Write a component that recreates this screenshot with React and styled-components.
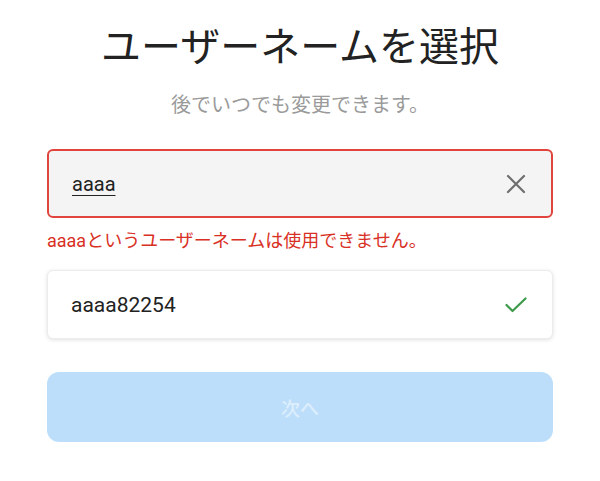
import React from 'react';
import styled, { createGlobalStyle } from 'styled-components';

const GlobalStyle = createGlobalStyle`
  body {
    margin: 0;
    background: #ffffff;
    font-family: Roboto, "Noto Sans CJK JP", sans-serif;
  }
`;

const Page = styled.div`
  width: 506px;
  margin: 0 auto;
  padding-top: 23px;
  display: flex;
  flex-direction: column;
`;

const Title = styled.h1`
  margin: 0;
  font-size: 40px;
  line-height: 50px;
  font-weight: 400;
  color: #222222;
  text-align: center;
`;

const Subtitle = styled.p`
  margin: 17px 0 0;
  font-size: 20px;
  line-height: 30px;
  color: #9a9a9a;
  text-align: center;
`;

const Field = styled.div`
  box-sizing: border-box;
  height: 69px;
  margin-top: ${(p) => p.$top}px;
  display: flex;
  align-items: center;
  justify-content: space-between;
  padding: 0 25px 0 23px;
  border-radius: 6px;
  background: ${(p) => (p.$error ? '#f4f4f4' : '#ffffff')};
  border: ${(p) => (p.$error ? '2px solid #e0443c' : '1px solid #ececec')};
  box-shadow: ${(p) => (p.$error ? 'none' : '0 1px 4px rgba(0,0,0,0.12)')};
`;

const Value = styled.span`
  font-size: ${(p) => p.$size}px;
  color: #222222;
  text-decoration: ${(p) => (p.$underline ? 'underline' : 'none')};
  text-underline-offset: 4px;
  text-decoration-thickness: 1px;
`;

const ErrorText = styled.p`
  margin: 10px 0 0;
  font-size: 18px;
  line-height: 25px;
  color: #d93025;
`;

const NextButton = styled.button`
  margin-top: 33px;
  height: 70px;
  border: none;
  border-radius: 12px;
  background: #bddefa;
  color: #dceefc;
  font-family: inherit;
  font-size: 19px;
  font-weight: 500;
`;

const ClearIcon = () => (
  <svg width="20" height="20" viewBox="0 0 20 20">
    <path d="M2 2 L18 18 M18 2 L2 18" stroke="#6e6e6e" strokeWidth="2.2" strokeLinecap="round" />
  </svg>
);

const CheckIcon = () => (
  <svg width="22" height="16" viewBox="0 0 22 16">
    <path d="M1.5 8 L7.5 14 L20.5 1.5" stroke="#3d9a4a" strokeWidth="2.2" fill="none" strokeLinecap="round" strokeLinejoin="round" />
  </svg>
);

export default function App() {
  return (
    <>
      <GlobalStyle />
      <Page>
        <Title>ユーザーネームを選択</Title>
        <Subtitle>後でいつでも変更できます。</Subtitle>
        <Field $error $top={29}>
          <Value $underline $size={20}>aaaa</Value>
          <ClearIcon />
        </Field>
        <ErrorText>aaaaというユーザーネームは使用できません。</ErrorText>
        <Field $top={17}>
          <Value $size={21}>aaaa82254</Value>
          <CheckIcon />
        </Field>
        <NextButton>次へ</NextButton>
      </Page>
    </>
  );
}
